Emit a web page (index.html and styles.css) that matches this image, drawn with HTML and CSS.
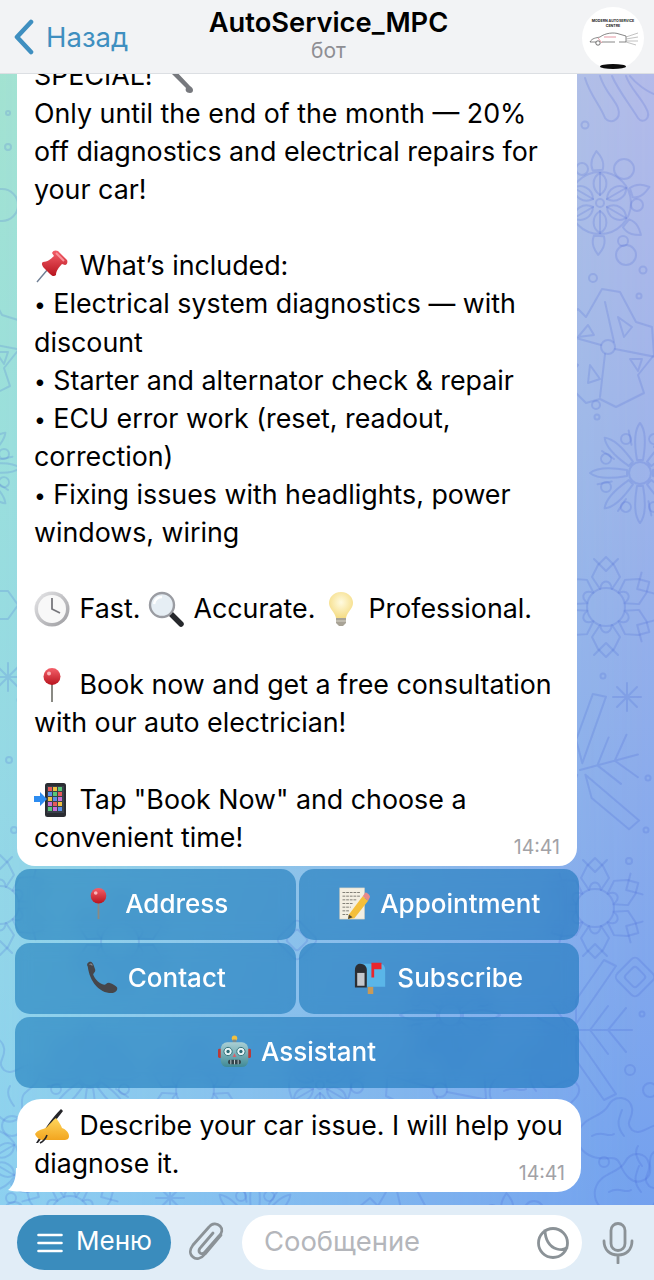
FILE: index.html
```html
<!DOCTYPE html>
<html lang="ru">
<head>
    <meta charset="UTF-8">
    <meta name="viewport" content="width=device-width, initial-scale=1.0">
    <title>AutoService_MPC</title>
    <link rel="stylesheet" href="styles.css">
</head>
<body>
<svg class="defs" width="0" height="0">
    <defs>
        <linearGradient id="red" x1="0" y1="0" x2="0" y2="1"><stop offset="0" stop-color="#f4606a"/><stop offset="1" stop-color="#b8141e"/></linearGradient>
        <radialGradient id="bulb" cx=".5" cy=".4" r=".6"><stop offset="0" stop-color="#fffbe0"/><stop offset="1" stop-color="#f5dc84"/></radialGradient>
        <linearGradient id="steel" x1="0" y1="0" x2="1" y2="1"><stop offset="0" stop-color="#e8e8ea"/><stop offset="1" stop-color="#9a9a9e"/></linearGradient>
        <linearGradient id="teal" x1="0" y1="0" x2="0" y2="1"><stop offset="0" stop-color="#a9cfd4"/><stop offset="1" stop-color="#3f8a96"/></linearGradient>
        <linearGradient id="hand" x1="0" y1="0" x2="0" y2="1"><stop offset="0" stop-color="#ffd75e"/><stop offset="1" stop-color="#f2a51f"/></linearGradient>

        <symbol id="e-pushpin" viewBox="0 0 36 36">
            <path d="M3 34 L14 21" stroke="#6f7f95" stroke-width="1.4"/>
            <path d="M9 14 C13 14 17 11 20 8 L18 5 C19 2 22 2 24 3 L33 12 C34 14 33 17 31 17 L28 16 C25 19 22 23 22 27 C20 29 18 28 16 26 L10 20 C8 18 7 15 9 14Z" fill="url(#red)"/>
            <path d="M22 5 L30 13" stroke="#f9929a" stroke-width="2"/>
        </symbol>
        <symbol id="e-clock" viewBox="0 0 36 36">
            <circle cx="18" cy="18" r="17.5" fill="url(#steel)"/>
            <circle cx="18" cy="18" r="14" fill="#f8f8f8"/>
            <path d="M18 7 V18 L26 22" fill="none" stroke="#77777c" stroke-width="1.8"/>
        </symbol>
        <symbol id="e-magnifier" viewBox="0 0 36 36">
            <path d="M22 22 L33 33" stroke="#26282c" stroke-width="5.5" stroke-linecap="round"/>
            <circle cx="14" cy="14" r="12" fill="#e6eef4" stroke="#9a9ca2" stroke-width="2.4"/>
            <path d="M6 13 C7 8 10 6 14 6" fill="none" stroke="#fff" stroke-width="2.5"/>
        </symbol>
        <symbol id="e-bulb" viewBox="0 0 36 36">
            <path d="M18 1 C10 1 6 7 6 12 C6 18 12 21 13 27 H23 C24 21 30 18 30 12 C30 7 26 1 18 1Z" fill="url(#bulb)"/>
            <path d="M13 27 H23 V32 L20 35 H16 L13 32Z" fill="#a8a396"/>
            <path d="M13 30 H23" stroke="#d8d4c8" stroke-width="1"/>
        </symbol>
        <symbol id="e-pin" viewBox="0 0 36 36">
            <path d="M18 14 V35" stroke="#8a8a84" stroke-width="2"/>
            <circle cx="18" cy="9.5" r="8.5" fill="url(#red)"/>
            <circle cx="15" cy="6.5" r="2" fill="#fbb6ba"/>
        </symbol>
        <symbol id="e-mobile" viewBox="0 0 36 36">
            <rect x="11" y="1" width="21" height="34" rx="2.5" fill="#2b2d33"/>
            <rect x="13" y="4" width="17" height="27" fill="#39404a"/>
            <g fill="#e65a5a"><rect x="14" y="5" width="4" height="4"/><rect x="24" y="10" width="4" height="4"/><rect x="19" y="20" width="4" height="4"/></g>
            <g fill="#f0c040"><rect x="19" y="5" width="4" height="4"/><rect x="14" y="15" width="4" height="4"/><rect x="24" y="20" width="4" height="4"/></g>
            <g fill="#58c878"><rect x="24" y="5" width="4" height="4"/><rect x="19" y="10" width="4" height="4"/><rect x="14" y="25" width="4" height="4"/></g>
            <g fill="#5a90e8"><rect x="14" y="10" width="4" height="4"/><rect x="19" y="15" width="4" height="4"/><rect x="24" y="25" width="4" height="4"/></g>
            <g fill="#c870d8"><rect x="24" y="15" width="4" height="4"/><rect x="14" y="20" width="4" height="4"/><rect x="19" y="25" width="4" height="4"/></g>
            <path d="M0 14 H6 V10 L13 17 L6 24 V20 H0Z" fill="#2d8cf0"/>
        </symbol>
        <symbol id="e-memo" viewBox="0 0 36 36">
            <rect x="3" y="1" width="27" height="34" fill="#f3efe2" stroke="#cfcbbd" stroke-width=".6"/>
            <path d="M6 6 H26 M6 10 H26 M6 14 H22 M6 18 H18 M6 22 H15 M6 26 H13 M6 30 H12" stroke="#77756c" stroke-width="1" stroke-dasharray="3 1"/>
            <path d="M13 30 L28 10 L34 15 L19 34 L12 35Z" fill="#f4bf3a"/>
            <path d="M28 10 L31 6 C33 6 36 9 36 11 L34 15Z" fill="#e88a8a"/>
            <path d="M12 35 L13 30 L17 33Z" fill="#50483a"/>
        </symbol>
        <symbol id="e-phone" viewBox="0 0 36 36">
            <path d="M3 6 C1 3 4 0 7 1 C9 2 10 6 11 9 C12 12 9 13 9 15 C11 20 16 25 21 26 C23 26 24 23 27 24 C30 25 34 27 35 29 C36 32 33 35 29 35 C15 35 5 22 3 6Z" fill="#46464a"/>
            <path d="M5 4 C6 3 7 3 8 5" stroke="#8a8a8e" fill="none" stroke-width="1.2"/>
        </symbol>
        <symbol id="e-mailbox" viewBox="0 0 36 36">
            <path d="M15 28 H21 V36 H15Z" fill="#c79a58"/>
            <path d="M6 3 H28 C32 3 34 6 34 10 V28 H6Z" fill="#5ab6e8"/>
            <path d="M1 10 C1 5 4 3 7 3 C11 3 14 6 14 10 V29 H1Z" fill="#2c2e33"/>
            <path d="M3.5 13 H11.5 V27 H3.5Z" fill="#c4c7cc"/>
            <path d="M19 18 V2 H30 V9 H22 V18Z" fill="#e8262e"/>
        </symbol>
        <symbol id="e-robot" viewBox="0 0 36 36">
            <circle cx="18" cy="3.5" r="3" fill="#f0c040"/>
            <rect x="16" y="5" width="4" height="4" fill="#7a8a90"/>
            <rect x="0" y="15" width="4" height="10" rx="1.5" fill="#b83a3a"/>
            <rect x="32" y="15" width="4" height="10" rx="1.5" fill="#b83a3a"/>
            <rect x="3" y="8" width="30" height="27" rx="7" fill="url(#teal)"/>
            <circle cx="11" cy="18" r="4.5" fill="#e6f4f6" stroke="#2b6a74"/>
            <circle cx="25" cy="18" r="4.5" fill="#e6f4f6" stroke="#2b6a74"/>
            <circle cx="11" cy="18" r="1.8" fill="#2b6a74"/>
            <circle cx="25" cy="18" r="1.8" fill="#2b6a74"/>
            <path d="M16 24 L18 20 L20 24Z" fill="#d8606a"/>
            <rect x="11" y="27" width="14" height="5" rx="2" fill="#33434a"/>
            <path d="M14 27 V32 M18 27 V32 M22 27 V32" stroke="#c8d4d8" stroke-width="1"/>
        </symbol>
        <symbol id="e-writing" viewBox="0 0 36 36">
            <path d="M2 35 C10 22 18 10 27 1 L29 3 C22 12 14 22 4 35Z" fill="#26262a"/>
            <path d="M1 26 C4 21 9 22 13 19 C16 16 19 12 22 10 C25 14 27 17 28 20 C31 21 35 24 35 28 C35 31 33 32 30 32 H10 C7 32 3 31 1 26Z" fill="url(#hand)"/>
            <path d="M6 35 C10 33 12 30 13 27" fill="none" stroke="#26262a" stroke-width="1.6"/>
        </symbol>

        <g id="petal"><path d="M0 -8 C-9 -14 -8 -26 0 -30 C8 -26 9 -14 0 -8Z"/><path d="M0 -8 V-30"/></g>
        <g id="wheel">
            <circle r="31"/><circle r="4"/>
            <use href="#petal"/><use href="#petal" transform="rotate(60)"/><use href="#petal" transform="rotate(120)"/>
            <use href="#petal" transform="rotate(180)"/><use href="#petal" transform="rotate(240)"/><use href="#petal" transform="rotate(300)"/>
            <path d="M-5 -33 C-8 -42 -3 -48 0 -52 C3 -48 8 -42 5 -33Z" transform="rotate(-4)"/>
            <path d="M-5 -33 C-8 -42 -3 -48 0 -52 C3 -48 8 -42 5 -33Z" transform="rotate(72)"/>
            <path d="M-5 -33 C-8 -42 -3 -48 0 -52 C3 -48 8 -42 5 -33Z" transform="rotate(128)"/>
            <path d="M-5 -33 C-8 -42 -3 -48 0 -52 C3 -48 8 -42 5 -33Z" transform="rotate(182)"/>
            <circle cx="-18" cy="-34" r="6"/><circle cx="24" cy="-34" r="10"/><circle cx="37" cy="2" r="6"/>
            <circle cx="23" cy="38" r="5"/><circle cx="26" cy="52" r="10"/>
        </g>
        <g id="kite">
            <circle r="7"/>
            <path d="M-7 -2 L-50 -14 M6 -5 L-3 -45 M7 2 L48 10 M-3 7 L-8 50"/>
            <path d="M-52 -20 L-30 -38 L-22 -30 L-6 -58 L12 -55 L28 -25 L44 -20 L46 8 L30 28 L36 46 L8 60 L-8 52 L-22 56 L-44 34 L-30 18 L-54 6Z"/>
            <path d="M-30 -10 L-20 -22 L-14 -12Z M10 -30 L24 -20 L16 -10Z M22 12 L34 12 L30 24Z M-18 18 L-8 32 L-20 36Z"/>
        </g>
        <g id="burst">
            <circle r="11"/>
            <g id="ray"><path d="M-3 -13 C-6 -30 -5 -44 0 -50 C5 -44 6 -30 3 -13Z"/><circle cx="-14" cy="-34" r="5"/><path d="M14 -26 L22 -38"/></g>
            <use href="#ray" transform="rotate(45)"/><use href="#ray" transform="rotate(90)"/><use href="#ray" transform="rotate(135)"/>
            <use href="#ray" transform="rotate(180)"/><use href="#ray" transform="rotate(225)"/><use href="#ray" transform="rotate(270)"/><use href="#ray" transform="rotate(315)"/>
        </g>
        <g id="arm"><path d="M-6 -18 L-14 -30 L-8 -42 L0 -50 L8 -42 L14 -30 L6 -18 C4 -28 -4 -28 -6 -18Z"/><path d="M-12 -48 L0 -36 L12 -48"/></g>
        <g id="snow">
            <circle r="19"/>
            <use href="#arm"/><use href="#arm" transform="rotate(60)"/><use href="#arm" transform="rotate(120)"/>
            <use href="#arm" transform="rotate(180)"/><use href="#arm" transform="rotate(240)"/><use href="#arm" transform="rotate(300)"/>
        </g>
        <g id="fern">
            <path d="M0 0 H-60 M-18 0 L-36 -24 M-18 0 L-36 24 M-36 0 L-54 -22 M-36 0 L-54 22"/>
            <path d="M-4 -6 L-44 -64 L-32 -70 L-4 -30Z M-4 6 L-44 64 L-32 70 L-4 30Z"/>
            <path d="M4 -4 L24 -32 M4 4 L24 32 M12 0 L34 -12 M12 0 L34 12"/>
        </g>
        <g id="splash">
            <path d="M-50 -6 C-46 -24 -26 -22 -20 -34 C-14 -46 2 -44 4 -32 C6 -22 -4 -18 4 -10 C14 -2 26 -22 36 -12 C46 -2 30 8 24 14 C18 22 28 34 16 40 C4 46 -4 34 -8 24 C-12 14 -20 20 -30 18 C-42 16 -52 8 -50 -6Z"/>
            <path d="M-36 -4 C-26 -10 -20 -2 -14 -6 M-6 -30 C-10 -20 -12 -14 -4 -4 M14 26 C8 18 6 12 10 6"/>
        </g>
        <path id="hex" d="M-16 0 L-6 -14 H8 L18 0 L8 14 H-6Z"/>
        <g id="diamond"><rect x="-15" y="-15" width="30" height="30" rx="5" transform="rotate(45)"/><rect x="-8" y="-8" width="16" height="16" rx="3" transform="rotate(45)"/></g>
        <path id="star" d="M-10 -10 L10 10 M-10 10 L10 -10 M-14 0 H14 M0 -14 V14"/>
    </defs>
</svg>

<div class="screen">
    <div class="wallpaper">
        <svg class="doodles" width="654" height="1280" viewBox="0 0 654 1280">
            <path d="M585 78 C590 95 600 105 605 118 C610 125 622 120 618 108 C614 98 605 92 600 76"/>
            <path d="M612 76 C618 90 630 105 638 118 C643 125 652 118 646 108 C640 96 630 88 626 76"/>
            <path d="M630 76 C636 84 648 92 654 94"/>
            <circle cx="585" cy="125" r="3.5"/><circle cx="8" cy="147" r="3"/>
            <use href="#wheel" x="600" y="203"/>
            <circle cx="643" cy="270" r="3.5"/><circle cx="593" cy="278" r="4"/><circle cx="639" cy="296" r="2.5"/>
            <use href="#kite" x="608" y="347"/>
            <use href="#burst" x="640" y="473"/>
            <circle cx="596" cy="405" r="4"/><circle cx="597" cy="417" r="2.5"/>
            <use href="#snow" x="606" y="607"/>
            <circle cx="603" cy="676" r="2.5"/><circle cx="648" cy="778" r="2.5"/><circle cx="646" cy="830" r="2.5"/><circle cx="629" cy="861" r="3"/>
            <use href="#star" x="627" y="697"/>
            <use href="#fern" transform="translate(580 770) rotate(165)"/>
            <use href="#snow" x="595" y="908"/>
            <use href="#diamond" x="635" y="977"/>
            <circle cx="642" cy="1014" r="2.5"/>
            <use href="#fern" transform="translate(572 1030) rotate(180)"/>
            <circle cx="630" cy="1070" r="5"/><circle cx="650" cy="1090" r="7"/>
            <use href="#splash" x="628" y="1140"/>
            <use href="#splash" x="645" y="1196"/>
            <circle cx="604" cy="1162" r="5"/>

            <circle cx="2" cy="205" r="16"/><use href="#hex" x="0" y="605"/>
            <use href="#kite" x="-26" y="340"/><use href="#burst" x="-30" y="468"/>
            <use href="#star" x="8" y="677"/>
            <circle cx="9" cy="760" r="3"/><circle cx="14" cy="830" r="3"/><circle cx="20" cy="700" r="2.5"/><circle cx="8" cy="113" r="2"/>
            <use href="#snow" x="0" y="905"/><use href="#splash" x="0" y="1080"/><use href="#wheel" x="-12" y="1160"/>

            <use href="#burst" x="90" y="1075"/><use href="#snow" x="195" y="1090"/><use href="#wheel" x="320" y="1085"/>
            <use href="#kite" x="440" y="1090"/><use href="#splash" x="540" y="1095"/>
            <use href="#snow" x="70" y="1215"/><use href="#star" x="170" y="1198"/><use href="#burst" x="255" y="1230"/>
            <use href="#kite" x="400" y="1236"/><use href="#wheel" x="510" y="1245"/>
            <use href="#diamond" x="297" y="940"/>
            <use href="#snow" x="120" y="942"/><use href="#burst" x="450" y="1015"/>
        </svg>
    </div>

    <header class="topbar">
        <a class="back">
            <svg width="21" height="36" viewBox="0 0 21 36"><path d="M18 3 L4 18 L18 33" fill="none" stroke="#3f8fc0" stroke-width="4.6" stroke-linecap="round" stroke-linejoin="round"/></svg>
            <span>Назад</span>
        </a>
        <div class="title">
            <div class="title-name">AutoService_MPC</div>
            <div class="title-sub">бот</div>
        </div>
        <div class="avatar">
            <svg width="62" height="62" viewBox="0 0 62 62">
                <circle cx="31" cy="31" r="31" fill="#fff"/>
                <text x="31" y="15" class="logo-text">MODERN AUTOSERVICE</text>
                <text x="31" y="20" class="logo-text">CENTRE</text>
                <path d="M8 35 C10 31 14 31 18 30 C23 26 32 25 37 27 L44 29 V35 H37 M8 35 H14 M20 35 H33" fill="none" stroke="#555" stroke-width=".7"/>
                <path d="M16 31 L20 36 M22 30 H34" stroke="#d86878" stroke-width=".7"/>
                <circle cx="16" cy="36" r="2.2" fill="none" stroke="#333" stroke-width=".7"/>
                <path d="M44 30 L56 26 M44 32 L56 30 M44 34 L56 34 M44 35 L54 38" stroke="#999" stroke-width=".6"/>
                <ellipse cx="31" cy="59.5" rx="13" ry="2.4" fill="#0c0c0c"/>
            </svg>
        </div>
    </header>

    <main class="chat">
        <div class="bubble bubble-long">
            SPECIAL! <svg class="emoji" viewBox="0 0 36 36"><path d="M4 2 L8 0 L14 6 L13 10 L30 28 C34 30 34 35 30 35 C26 35 25 32 26 30 L10 14 L5 13 L1 7 L6 9Z" fill="#77797e"/></svg><br>
            Only until the end of the month — 20%<br>
            off diagnostics and electrical repairs for<br>
            your car!<br>
            <br>
            <svg class="emoji"><use href="#e-pushpin"/></svg> What’s included:<br>
            <span class="dot">•</span> Electrical system diagnostics — with<br>
            discount<br>
            <span class="dot">•</span> Starter and alternator check &amp; repair<br>
            <span class="dot">•</span> ECU error work (reset, readout,<br>
            correction)<br>
            <span class="dot">•</span> Fixing issues with headlights, power<br>
            windows, wiring<br>
            <br>
            <svg class="emoji"><use href="#e-clock"/></svg> Fast. <svg class="emoji"><use href="#e-magnifier"/></svg> Accurate. <svg class="emoji"><use href="#e-bulb"/></svg> Professional.<br>
            <br>
            <svg class="emoji"><use href="#e-pin"/></svg> Book now and get a free consultation<br>
            with our auto electrician!<br>
            <br>
            <svg class="emoji"><use href="#e-mobile"/></svg> Tap "Book Now" and choose a<br>
            convenient time!
            <span class="time">14:41</span>
        </div>

        <div class="keyboard">
            <button class="key"><svg class="key-icon"><use href="#e-pin"/></svg>Address</button>
            <button class="key"><svg class="key-icon"><use href="#e-memo"/></svg>Appointment</button>
            <button class="key"><svg class="key-icon"><use href="#e-phone"/></svg>Contact</button>
            <button class="key"><svg class="key-icon"><use href="#e-mailbox"/></svg>Subscribe</button>
            <button class="key key-wide"><svg class="key-icon"><use href="#e-robot"/></svg>Assistant</button>
        </div>

        <div class="bubble bubble-short">
            <svg class="tail" width="22" height="24" viewBox="0 0 22 24"><path d="M22 0 V22 C16 24 8 24 0 22 C5 18 8 12 8 0Z" fill="#fff"/></svg>
            <svg class="emoji"><use href="#e-writing"/></svg> Describe your car issue. I will help you<br>
            diagnose it.
            <span class="time">14:41</span>
        </div>
    </main>

    <footer class="inputbar">
        <button class="menu-btn">
            <svg width="26" height="22" viewBox="0 0 26 22"><path d="M1.5 3 H24.5 M1.5 11 H24.5 M1.5 19 H24.5" stroke="#fff" stroke-width="2.6" stroke-linecap="round"/></svg>
            <span class="lift">Меню</span>
        </button>
        <svg class="tool-icon" width="37" height="40" viewBox="0 0 37 40"><path d="M33 13 L17 32 C13 37 8 38 5 35 C1 32 2 27 5 23 L21 5 C24 1 29 1 32 4 C35 7 34 11 31 14 L17 30 C15 32 13 32 12 31 C10 29 11 27 13 25 L25 11" fill="none" stroke="#8b9297" stroke-width="2.8" stroke-linecap="round" stroke-linejoin="round"/></svg>
        <div class="message-input">
            <span class="lift">Сообщение</span>
            <svg width="34" height="34" viewBox="0 0 34 34"><path d="M17 2.5 C25 2.5 31.5 9 31.5 17 C31.5 25 25 31.5 17 31.5 C9 31.5 2.5 25 2.5 17 C2.5 9 9 2.5 17 2.5Z M9 3.5 C9 13 13 21 21 23 C25 24 29 24 31.5 21" fill="none" stroke="#8b9297" stroke-width="2.8" stroke-linejoin="round"/></svg>
        </div>
        <svg class="tool-icon" width="32" height="42" viewBox="0 0 32 42"><rect x="9" y="1.5" width="14" height="27" rx="7" fill="none" stroke="#8b9297" stroke-width="2.8"/><path d="M2 19 C2 28 8 33 16 33 C24 33 30 28 30 19 M16 33 V41" fill="none" stroke="#8b9297" stroke-width="2.8" stroke-linecap="round"/></svg>
    </footer>
</div>
</body>
</html>
```

FILE: styles.css
```css
html, body {
    margin: 0;
    padding: 0;
}
body {
    font-family: Inter, "Noto Sans", sans-serif;
    color: #000;
}
.defs {
    position: absolute;
}
.screen {
    position: relative;
    width: 654px;
    height: 1280px;
    display: flex;
    flex-direction: column;
    overflow: hidden;
}

/* wallpaper: two vertical gradients blended left to right */
.wallpaper {
    position: absolute;
    inset: 0;
    background: linear-gradient(180deg, #b7bcea 0%, #9fb4ea 35%, #6f9fef 100%);
}
.wallpaper::before {
    content: "";
    position: absolute;
    inset: 0;
    background: linear-gradient(180deg, #a4e3cf 0%, #9adfdc 35%, #8ccff2 100%);
    -webkit-mask-image: linear-gradient(90deg, #000 0%, transparent 100%);
    mask-image: linear-gradient(90deg, #000 0%, transparent 100%);
}
.doodles {
    position: absolute;
    inset: 0;
    fill: none;
    stroke: rgba(55, 85, 205, 0.17);
    stroke-width: 2;
    stroke-linejoin: round;
    stroke-linecap: round;
}

.topbar {
    position: relative;
    z-index: 2;
    flex: 0 0 74px;
    box-sizing: border-box;
    height: 74px;
    display: grid;
    grid-template-columns: 1fr auto 1fr;
    align-items: center;
    padding: 0 10px 0 13px;
    background: #f2f3f5;
    border-bottom: 1px solid #dcdfe3;
}
.back {
    display: flex;
    align-items: center;
    gap: 12px;
    color: #3f8fc0;
    font-size: 27.5px;
}
.title {
    text-align: center;
    margin-top: -3px;
}
.title-name {
    font-size: 27.3px;
    font-weight: 600;
    line-height: 32px;
}
.title-sub {
    font-size: 21px;
    line-height: 24px;
    color: #8e8e93;
}
.avatar {
    justify-self: end;
    height: 62px;
    margin-top: 2px;
}
.logo-text {
    font-size: 3.6px;
    font-weight: 700;
    text-anchor: middle;
    fill: #222;
}

.chat {
    position: relative;
    flex: 1;
    min-height: 0;
    display: flex;
    flex-direction: column;
    justify-content: flex-end;
    padding-bottom: 13px;
}
.bubble {
    position: relative;
    flex: none;
    box-sizing: border-box;
    margin-left: 17px;
    padding: 7px 17px 10px;
    background: #fff;
    border-radius: 20px;
    font-size: 26.8px;
    line-height: 38.1px;
    white-space: nowrap;
}
.bubble-long {
    width: 560px;
    border-radius: 0 0 18px 18px;
}
.bubble-short {
    width: 564px;
    margin-top: 11px;
    border-radius: 24px 24px 24px 8px;
    font-size: 26.6px;
}
.tail {
    position: absolute;
    left: -9px;
    bottom: 0;
}
.emoji {
    display: inline-block;
    width: 36px;
    height: 36px;
    margin: -8px 2px -8px 0;
    vertical-align: -1px;
}
.dot {
    font-size: 21px;
    line-height: 0;
    vertical-align: 1px;
}
.time {
    position: absolute;
    right: 17px;
    bottom: 8px;
    font-size: 19.5px;
    line-height: 22px;
    color: #a2a2a6;
}
.bubble-short .time {
    right: 16px;
}

.keyboard {
    flex: none;
    width: 564px;
    margin: 3px 0 0 15px;
    display: grid;
    grid-template-columns: 1fr 1fr;
    grid-auto-rows: 71px;
    gap: 3px;
}
.key {
    display: flex;
    align-items: center;
    justify-content: center;
    gap: 10px;
    border: none;
    border-radius: 15px;
    padding: 0 0 2px;
    background: rgba(0, 105, 175, 0.49);
    -webkit-backdrop-filter: blur(8px);
    backdrop-filter: blur(8px);
    color: #fff;
    font-family: inherit;
    font-size: 26px;
    font-weight: 500;
}
.key-wide {
    grid-column: span 2;
}
.key-icon {
    width: 33px;
    height: 33px;
}

.inputbar {
    position: relative;
    z-index: 2;
    flex: 0 0 75px;
    box-sizing: border-box;
    display: flex;
    align-items: flex-start;
    padding: 10px 0 0 17px;
    background: #e1edf7;
}
.lift {
    margin-top: -4px;
}
.menu-btn {
    width: 154px;
    height: 55px;
    display: flex;
    align-items: center;
    gap: 13px;
    padding: 0 0 0 20px;
    border: none;
    border-radius: 28px;
    background: #3a8cbd;
    color: #fff;
    font-family: inherit;
    font-size: 26px;
}
.tool-icon {
    flex: none;
    margin: 7px 17px 0;
}
.tool-icon:last-child {
    margin: 7px 0 0 20px;
}
.message-input {
    width: 340px;
    height: 55px;
    box-sizing: border-box;
    display: flex;
    align-items: center;
    justify-content: space-between;
    padding: 0 12px 0 22px;
    background: #fff;
    border-radius: 28px;
    color: #b4b6bb;
    font-size: 27.4px;
}
```
